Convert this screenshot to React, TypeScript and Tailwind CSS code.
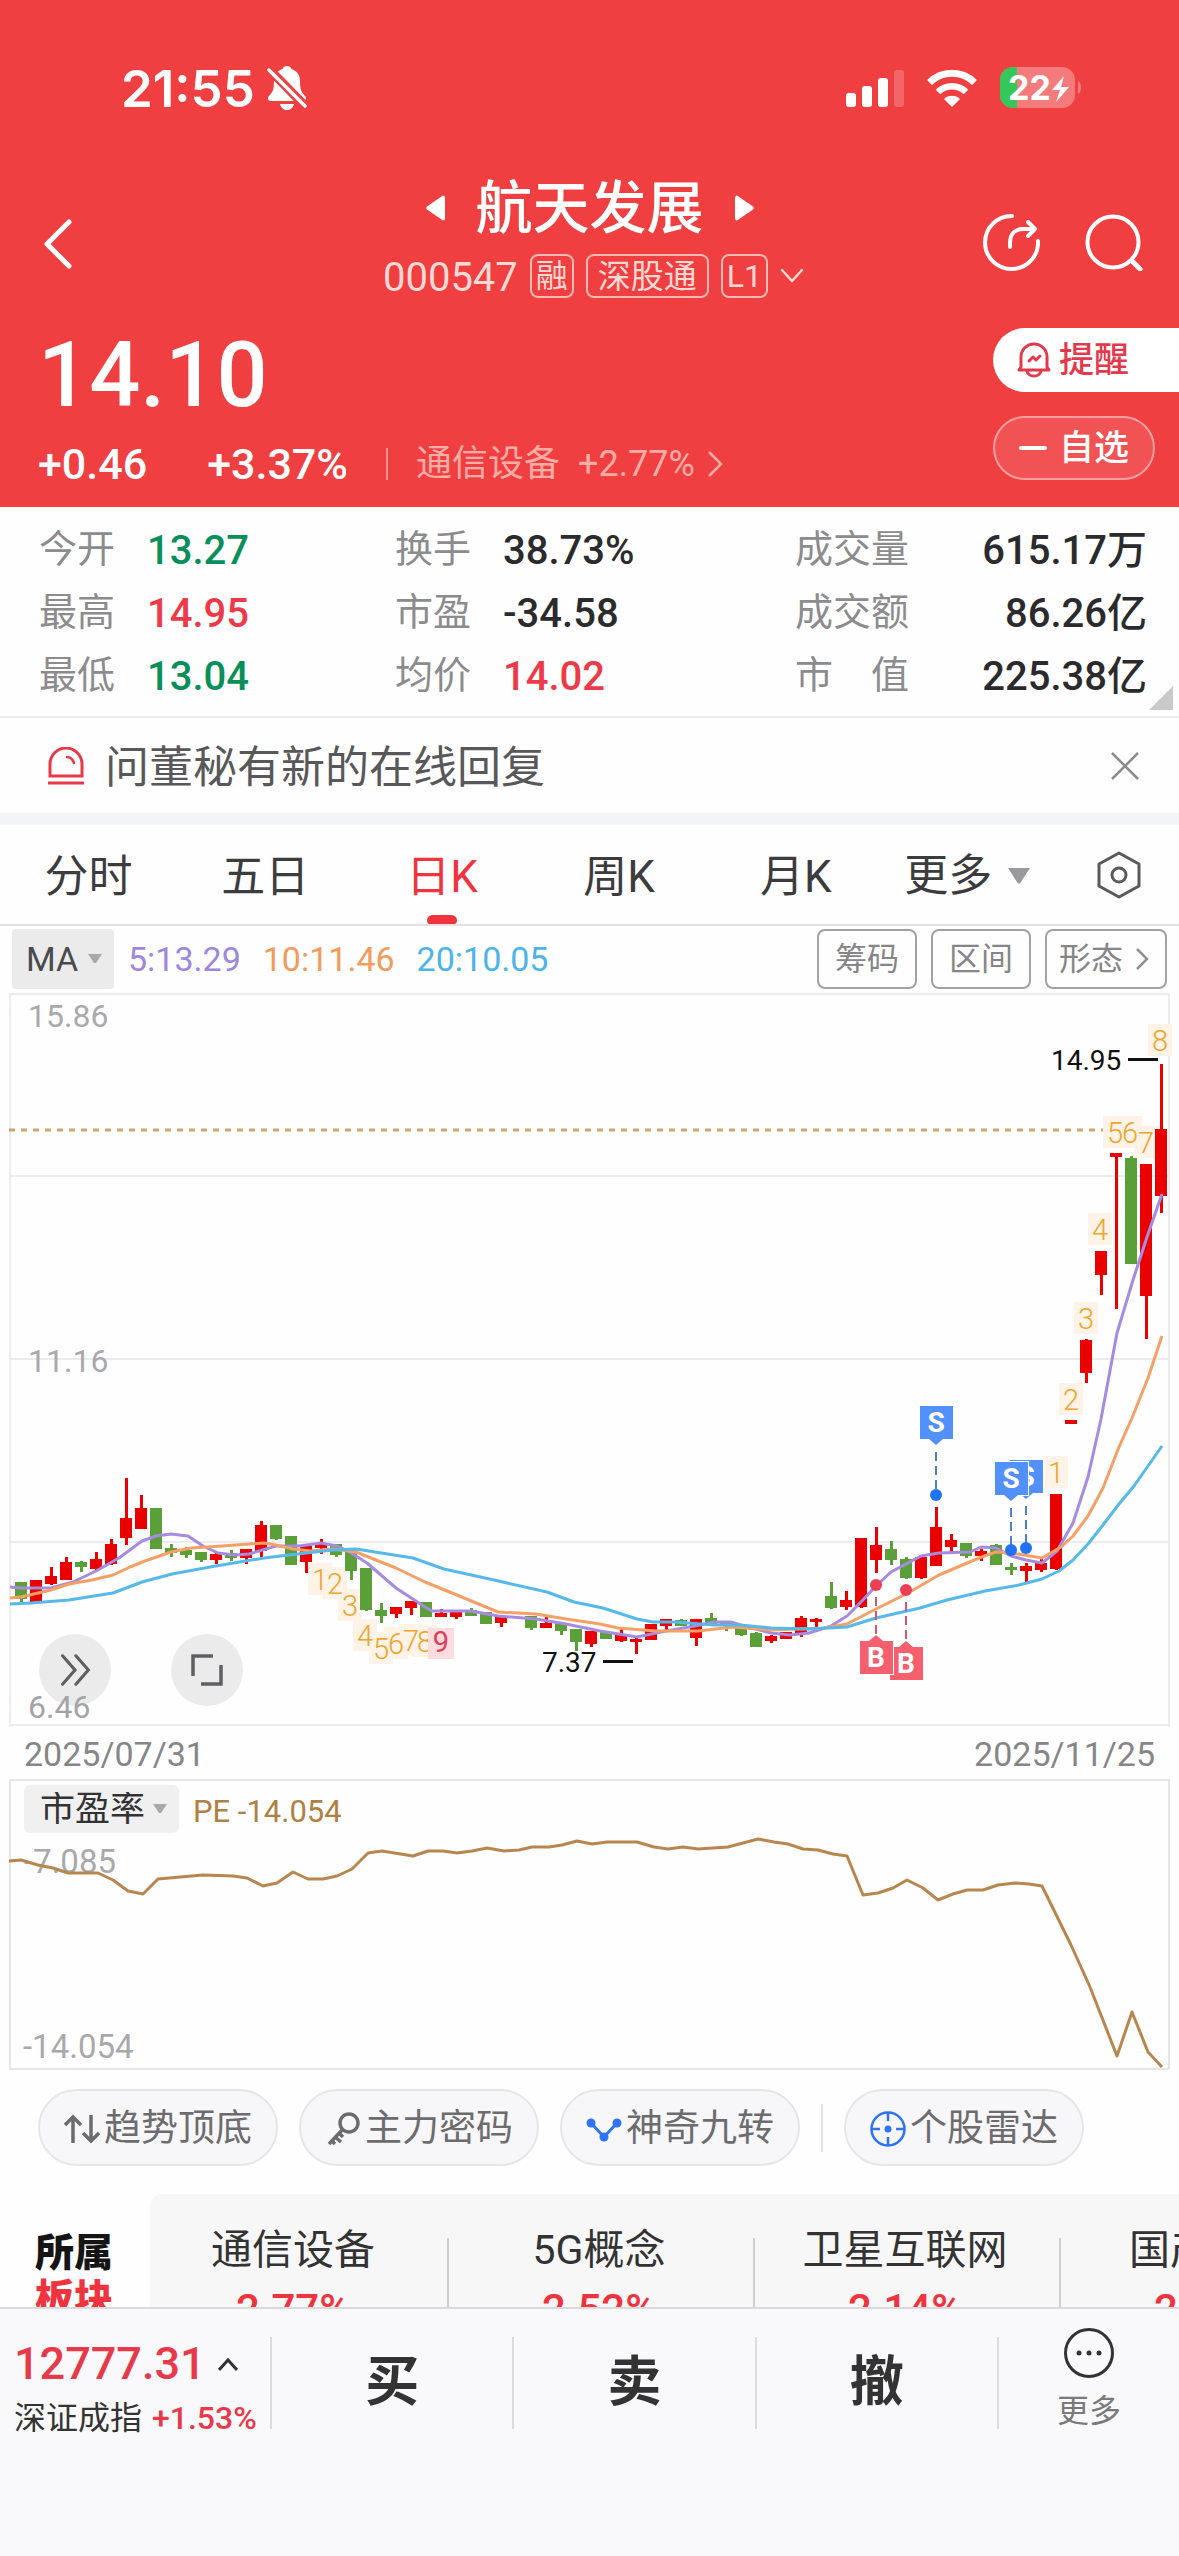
import { useState } from "react";

type Candle = [high: number, top: number, bottom: number, low: number, up: number];

// high, body top, body bottom, low (chart units), 1 = up day
const CANDLES: Candle[] = [
  [592, 592, 609, 612, 0], [590, 590, 612, 612, 1], [577, 586, 594, 595, 1], [567, 572, 590, 590, 1],
  [571, 572, 577, 582, 0], [562, 569, 579, 580, 1], [549, 554, 574, 575, 1], [488, 528, 548, 555, 1],
  [505, 518, 539, 539, 1], [518, 518, 559, 559, 0], [554, 558, 563, 567, 0], [557, 560, 565, 568, 0],
  [562, 562, 570, 572, 0], [563, 564, 570, 574, 1], [560, 563, 568, 571, 0], [559, 559, 568, 574, 1],
  [531, 535, 561, 567, 1], [535, 535, 549, 550, 0], [546, 546, 575, 575, 0], [556, 556, 572, 583, 1],
  [549, 553, 558, 564, 1], [554, 554, 565, 567, 0], [561, 562, 581, 590, 0], [578, 578, 620, 621, 0],
  [613, 620, 626, 633, 0], [617, 617, 624, 628, 1], [611, 611, 618, 625, 1], [612, 612, 627, 627, 0],
  [619, 623, 627, 627, 1], [621, 621, 627, 629, 1], [618, 620, 626, 626, 0], [622, 622, 634, 634, 0],
  [627, 627, 633, 637, 1], [627, 627, 628, 628, 0], [626, 626, 638, 640, 0], [627, 633, 638, 638, 1],
  [633, 633, 641, 645, 0], [639, 639, 652, 661, 0], [641, 641, 654, 657, 1], [642, 642, 649, 649, 0],
  [639, 645, 651, 652, 1], [648, 649, 652, 664, 1], [634, 634, 650, 650, 1], [629, 629, 636, 640, 1],
  [629, 630, 636, 636, 0], [629, 629, 648, 656, 1], [623, 628, 634, 634, 0], [632, 632, 635, 641, 0],
  [634, 635, 645, 646, 0], [642, 643, 657, 657, 0], [645, 646, 651, 653, 1], [642, 642, 649, 649, 1],
  [626, 628, 644, 647, 1], [628, 629, 632, 637, 1], [592, 606, 618, 619, 0], [601, 610, 617, 620, 1],
  [548, 548, 617, 618, 1], [537, 555, 570, 583, 1], [551, 559, 570, 575, 0], [567, 569, 588, 589, 0],
  [567, 567, 588, 589, 1], [517, 537, 576, 576, 1], [544, 550, 557, 562, 1], [553, 553, 566, 568, 0],
  [559, 561, 566, 571, 1], [554, 555, 575, 575, 0], [573, 577, 580, 585, 0], [573, 576, 581, 593, 1],
  [569, 573, 580, 582, 1], [504, 504, 579, 580, 1], [430, 430, 434, 434, 1], [349, 350, 383, 393, 1],
  [261, 261, 285, 305, 1], [163, 163, 167, 319, 1], [166, 168, 274, 274, 0], [174, 174, 306, 349, 1],
  [74, 139, 206, 223, 1],
];

const MA5 =
  "10,597 21,598 51,598 73,592 96,581 119,568 142,551 156,546 171,544 188,546 203,556 218,563 235,565 249,564 276,556 299,556 321,553 337,556 348,561 367,573 396,598 425,617 432,621 471,621 498,626 536,629 566,634 600,641 637,647 666,641 695,636 714,632 731,632 744,636 771,643 790,645 809,643 831,636 847,626 861,612 876,596 891,582 921,566 939,563 970,562 981,557 996,558 1011,566 1026,570 1042,573 1057,561 1073,533 1088,487 1101,429 1109,386 1117,343 1133,290 1147,247 1162,204";
const MA10 =
  "10,608 21,607 51,600 69,594 92,590 113,585 130,577 145,571 171,562 191,558 222,556 264,553 276,555 293,559 310,561 333,559 356,562 396,578 425,592 452,603 498,622 536,624 566,629 600,634 618,638 656,641 698,641 733,637 771,640 824,638 847,634 876,619 908,603 939,585 979,568 996,562 1012,563 1042,568 1061,557 1073,546 1088,526 1103,498 1119,457 1132,428 1148,388 1162,346";
const MA20 =
  "10,614 31,613 69,610 113,603 142,592 172,584 210,577 264,568 306,563 333,560 356,559 413,568 444,579 494,590 547,602 574,612 603,618 637,629 653,632 675,632 714,635 740,635 771,638 809,639 847,637 876,628 920,618 947,610 985,601 1019,595 1042,589 1059,581 1073,570 1088,554 1103,535 1119,514 1134,496 1162,456";
const PE =
  "9,82 21,81 38,86 53,89 68,94 98,94 113,101 128,112 143,115 158,100 203,96 233,97 247,99 263,107 277,104 293,93 308,100 323,100 337,97 352,90 368,74 382,72 413,77 428,72 443,72 457,74 472,72 487,69 504,72 519,71 532,68 549,68 562,66 577,62 592,65 607,63 637,63 654,68 668,70 683,68 698,70 728,68 743,64 758,60 774,63 788,65 803,70 818,71 833,75 847,77 863,116 878,114 893,109 907,101 923,109 938,121 953,115 967,111 983,111 998,106 1015,104 1029,105 1042,107 1071,166 1090,208 1117,277 1132,233 1148,273 1162,288";

// x, centre y, digit
const TURNS: [number, number, string][] = [
  [320, 590, "1"], [335, 594, "2"], [350, 616, "3"], [365, 646, "4"], [381, 659, "5"],
  [396, 654, "6"], [411, 651, "7"], [425, 652, "8"],
  [1056, 483, "1"], [1071, 410, "2"], [1086, 329, "3"], [1100, 240, "4"],
  [1115, 143, "5"], [1130, 143, "6"], [1146, 153, "7"], [1160, 51, "8"],
];

const STATS = [
  [
    { label: "今开", value: "13.27", color: "text-[#0a8f5b]" },
    { label: "最高", value: "14.95", color: "text-[#ee3a48]" },
    { label: "最低", value: "13.04", color: "text-[#0a8f5b]" },
  ],
  [
    { label: "换手", value: "38.73%", color: "text-[#2b2b2d]" },
    { label: "市盈", value: "-34.58", color: "text-[#2b2b2d]" },
    { label: "均价", value: "14.02", color: "text-[#ee3a48]" },
  ],
  [
    { label: "成交量", value: "615.17万", color: "text-[#2b2b2d]" },
    { label: "成交额", value: "86.26亿", color: "text-[#2b2b2d]" },
    { label: "市　值", value: "225.38亿", color: "text-[#2b2b2d]" },
  ],
];

const PERIODS = ["分时", "五日", "日K", "周K", "月K"];

const SECTORS = [
  { name: "通信设备", change: "2.77%" },
  { name: "5G概念", change: "2.52%" },
  { name: "卫星互联网", change: "2.14%" },
  { name: "国产芯片", change: "2.08%" },
];

function StatusBar() {
  return (
    <div className="flex h-16 items-center justify-between pl-[121px] pr-24">
      <div className="flex items-center gap-3">
        <span className="font-['Inter',sans-serif] text-[51px] font-semibold leading-none">21:55</span>
        <svg className="h-11 w-10" viewBox="0 0 40 44" fill="#fff">
          <path d="M20 0c2 0 4 1 4.500 3C30 5 33 9 33 15c0 8 1 11 5 15 2 2 1 5-2 5H4c-3 0-4-3-2-5 4-4 5-7 5-15 0-6 3-10 8.500-12C16 1 18 0 20 0Z" />
          <path d="M13 38h14c-1 4-4 6-7 6s-6-2-7-6Z" />
          <path d="M2 3 38 40" stroke="#f03f41" strokeWidth="9" />
          <path d="M2 4 38 40" stroke="#fff" strokeWidth="3.500" strokeLinecap="round" />
        </svg>
      </div>
      <div className="flex items-center gap-[23px]">
        <svg className="h-10 w-[58px]" viewBox="0 0 58 40" fill="#fff">
          <rect x="0" y="25" width="10" height="14" rx="3" />
          <rect x="16" y="18" width="10" height="21" rx="3" />
          <rect x="32" y="10" width="10" height="29" rx="3" />
          <rect x="48" y="2" width="10" height="37" rx="3" opacity=".2" />
        </svg>
        <svg className="h-10 w-[50px]" viewBox="0 0 50 40" fill="none" stroke="#fff" strokeWidth="7">
          <path d="M2.500 14.500a32 32 0 0 1 45 0" />
          <path d="M11 24a20 20 0 0 1 28 0" strokeWidth="6.500" />
          <path d="M25 39l-8-8a11.500 11.500 0 0 1 16 0Z" fill="#fff" stroke="none" />
        </svg>
        <svg className="h-11 w-[83px]" viewBox="0 0 83 44">
          <clipPath id="battery">
            <rect x="0" y="1" width="75" height="41" rx="13" />
          </clipPath>
          <g clipPath="url(#battery)">
            <rect width="75" height="44" fill="#f57a7c" />
            <rect width="17" height="44" fill="#34c759" />
          </g>
          <path d="M78 15c4 2 4 11 0 13Z" fill="#f57a7c" />
          <text x="8" y="34" fill="#fff" fontSize="34" fontWeight="700" className="font-['Inter',sans-serif]">22</text>
          <path d="M64 10 52 24h8l-4 12 13-15h-8Z" fill="#fff" />
        </svg>
      </div>
    </div>
  );
}

function Header() {
  return (
    <header className="bg-[#f03f41] pb-[15px] pt-14 text-white">
      <StatusBar />
      <div className="mt-12 flex items-center justify-between pl-11 pr-9">
        <button aria-label="返回" className="w-40 pt-4">
          <svg className="h-[50px] w-7" viewBox="0 0 28 50" fill="none" stroke="#fff" strokeWidth="5" strokeLinecap="round" strokeLinejoin="round">
            <path d="M25 3 3 25l22 22" />
          </svg>
        </button>
        <div className="flex flex-col items-center">
          <div className="flex h-20 items-center gap-[31px] pr-2">
            <button aria-label="上一只">
              <svg className="h-[26px] w-[19px]" viewBox="0 0 19 26" fill="#fff">
                <path d="M17 .500c1 0 2 1 2 2v21c0 1-1 2-2 2L1 14.500c-1-1-1-2 0-3Z" />
              </svg>
            </button>
            <h1 className="text-[57px] font-medium leading-none">航天发展</h1>
            <button aria-label="下一只">
              <svg className="h-[26px] w-[19px]" viewBox="0 0 19 26" fill="#fff">
                <path d="M2 .500c-1 0-2 1-2 2v21c0 1 1 2 2 2l16-11c1-1 1-2 0-3Z" />
              </svg>
            </button>
          </div>
          <div className="flex h-14 items-center gap-3 text-[#ffd9d3]">
            <span className="pt-1 text-[40px] leading-none">000547</span>
            <span className="flex h-11 items-center rounded-lg border-2 border-[#ffb9b3] px-1 text-[32px] leading-none">融</span>
            <span className="flex h-11 items-center rounded-lg border-2 border-[#ffb9b3] px-2.5 text-[33px] leading-none">深股通</span>
            <span className="flex h-11 items-center rounded-lg border-2 border-[#ffb9b3] px-1 text-[32px] leading-none">L1</span>
            <button aria-label="展开">
              <svg className="h-4 w-6" viewBox="0 0 24 16" fill="none" stroke="#ffd9d3" strokeWidth="2.500" strokeLinecap="round">
                <path d="m2 2 10 11L22 2" />
              </svg>
            </button>
          </div>
        </div>
        <div className="flex w-40 justify-end gap-[45px] pt-3">
          <button aria-label="分享">
            <svg className="h-[58px] w-[58px]" viewBox="0 0 58 58" fill="none" stroke="#fff" strokeWidth="4" strokeLinecap="round" strokeLinejoin="round">
              <path d="M30 3A26.500 26.500 0 1 0 56 28" />
              <path d="M28 34v-4c0-9 5-14 13-14h11" />
              <path d="m46 9 7 7-7 7" />
            </svg>
          </button>
          <button aria-label="搜索">
            <svg className="h-[58px] w-[58px]" viewBox="0 0 58 58" fill="none" stroke="#fff" strokeWidth="4" strokeLinecap="round">
              <circle cx="28" cy="29" r="25.500" />
              <path d="m47 48 8 8" strokeWidth="5" />
            </svg>
          </button>
        </div>
      </div>

      <div className="flex justify-between">
        <div className="pl-[38px] pt-7">
          <div className="flex h-[88px] items-center text-[90px] font-medium leading-none">14.10</div>
          <div className="mt-4 flex h-14 items-center text-[43px] font-medium leading-none">
            <span className="mr-15">+0.46</span>
            <span>+3.37%</span>
            <span className="ml-[38px] h-8 w-0.5 bg-[#f8908f]" />
            <a href="#sector" className="ml-7 flex items-center gap-[18px] text-[36px] font-normal text-[#ffaca6]">
              通信设备
              <span>+2.77%</span>
              <svg className="-ml-1.5 h-7 w-4" viewBox="0 0 16 28" fill="none" stroke="#ffaca6" strokeWidth="2.500">
                <path d="m2 2 12 12L2 26" />
              </svg>
            </a>
          </div>
        </div>
        <div className="flex w-[186px] flex-col gap-6 pt-6 text-[35px] font-medium leading-none">
          <button className="flex h-16 items-center gap-2 rounded-l-full bg-white pl-6 text-[#e23a4c]">
            <svg className="h-9 w-[34px]" viewBox="0 0 34 36" fill="none" stroke="#e23a4c" strokeWidth="3" strokeLinecap="round" strokeLinejoin="round">
              <path d="M4 25V15a13 13 0 0 1 26 0v10l2 3H2Z" />
              <path d="M10 29c1 4 4 5 7 5s6-1 7-5" />
              <path d="m12 19 4-4 3 3 4-4" />
            </svg>
            提醒
          </button>
          <button className="mr-6 flex h-16 items-center gap-3 rounded-full border-2 border-[#f9a09f] bg-[#f15254] pl-6">
            <span className="h-1 w-7 rounded-full bg-white" />
            自选
          </button>
        </div>
      </div>
    </header>
  );
}

function Stats() {
  return (
    <section className="relative flex justify-between border-b-2 border-[#ececee] pb-2.5 pl-[39px] pr-8 pt-2.5">
      {STATS.map((column, i) => (
        <dl key={i} className={i === 2 ? "w-[352px]" : i === 1 ? "w-[292px]" : "w-[248px]"}>
          {column.map((s) => (
            <div key={s.label} className={`flex h-[63px] items-center ${i === 2 ? "justify-between" : "gap-8"}`}>
              <dt className="whitespace-pre text-[38px] leading-none text-[#8c8c8e]">{s.label}</dt>
              <dd className={`pt-1 text-[40px] font-medium leading-none ${s.color}`}>{s.value}</dd>
            </div>
          ))}
        </dl>
      ))}
      <svg className="absolute bottom-1.5 right-1.5 h-6 w-6" viewBox="0 0 24 24" fill="#c9c9cb">
        <path d="M24 0v24H0Z" />
      </svg>
    </section>
  );
}

function Notice() {
  return (
    <section className="flex h-[107px] items-center border-b-12 border-[#f3f4f7] pl-[47px] pr-10">
      <svg className="h-[38px] w-[38px]" viewBox="0 0 38 38" fill="none" stroke="#e8394a" strokeWidth="3">
        <path d="M3 29V17a16 16 0 0 1 32 0v12Z" />
        <path d="M1 36h36" />
        <path d="M20 10c4 0 6 3 7 6" strokeLinecap="round" strokeWidth="2.500" />
      </svg>
      <span className="ml-5 flex-1 pt-1 text-[44px] leading-none text-[#58585a]">问董秘有新的在线回复</span>
      <button aria-label="关闭">
        <svg className="h-7 w-7" viewBox="0 0 28 28" stroke="#8c8c8e" strokeWidth="2.500">
          <path d="m1 1 26 26M27 1 1 27" />
        </svg>
      </button>
    </section>
  );
}

function Tabs() {
  const [active, setActive] = useState("日K");
  return (
    <nav className="flex h-[101px] border-b-2 border-[#e2e2e4] text-[44px] leading-none text-[#3c3c3e]">
      {PERIODS.map((p) => (
        <button
          key={p}
          onClick={() => setActive(p)}
          className={`flex w-[15%] flex-col items-center justify-between pt-[30px] ${active === p ? "text-[#f0343f]" : ""}`}
        >
          {p}
          <span className={`h-[9px] w-[30px] rounded-t-md rounded-b-sm ${active === p ? "bg-[#f0343f]" : ""}`} />
        </button>
      ))}
      <button className="flex flex-1 items-center gap-4 pl-5 pt-0.5">
        更多
        <svg className="h-4 w-[22px]" viewBox="0 0 22 16" fill="#9a9a9c">
          <path d="M0 0h22L13 14c-1 2-3 2-4 0Z" />
        </svg>
      </button>
      <button aria-label="设置" className="pr-[38px]">
        <svg className="h-12 w-11" viewBox="0 0 44 48" fill="none" stroke="#5a5a5c" strokeWidth="3" strokeLinejoin="round">
          <path d="M22 2 42 13v22L22 46 2 35V13Z" />
          <circle cx="22" cy="24" r="7" />
        </svg>
      </button>
    </nav>
  );
}

function DropArrow() {
  return (
    <svg className="pointer-events-none absolute right-3 h-2.5 w-3.5" viewBox="0 0 14 10" fill="#a8a8aa">
      <path d="M0 0h14L8 9H6Z" />
    </svg>
  );
}

function MaBar() {
  return (
    <div className="flex h-16 items-center gap-[22px] pl-3 pr-3 pt-0.5 text-[34px] leading-none">
      <label className="relative -mr-2 flex items-center">
        <select aria-label="指标" className="h-[60px] w-[102px] appearance-none rounded bg-[#ebebeb] pl-3.5 text-[#4a4a4c]">
          <option>MA</option>
        </select>
        <DropArrow />
      </label>
      <span className="text-[#9f87dc]">5:13.29</span>
      <span className="text-[#f39b5c]">10:11.46</span>
      <span className="flex-1 text-[#4db4ea]">20:10.05</span>
      <div className="flex gap-3.5 text-[32px] text-[#868688]">
        <button className="h-[60px] rounded-lg border-2 border-[#a2a2a4] px-4">筹码</button>
        <button className="h-[60px] rounded-lg border-2 border-[#a2a2a4] px-4">区间</button>
        <button className="flex h-[60px] items-center gap-3 rounded-lg border-2 border-[#a2a2a4] pl-3 pr-4">
          形态
          <svg className="h-6 w-3.5" viewBox="0 0 14 24" fill="none" stroke="#909092" strokeWidth="2.500">
            <path d="m2 2 10 10L2 22" />
          </svg>
        </button>
      </div>
    </div>
  );
}

function Signal({ x, y, dot, kind }: { x: number; y: number; dot: number; kind: "S" | "B" }) {
  const sell = kind === "S";
  const tip = sell ? `M${x - 7} ${y + 33}h14l-7 6Z` : `M${x - 7} ${y}h14l-7-6Z`;
  return (
    <g>
      <line
        x1={x}
        x2={x}
        y1={sell ? y + 46 : dot + 12}
        y2={sell ? dot : y - 6}
        stroke={sell ? "#4c7fd0" : "#cf5870"}
        strokeWidth="2"
        strokeDasharray="9 5"
      />
      <circle cx={x} cy={dot} r="6" fill={sell ? "#2272f5" : "#ee3e52"} />
      <rect x={x - 17} y={y - 1} width="35" height="35" fill="#fff" />
      <rect x={x - 16} y={y} width="33" height="33" fill={sell ? "#5290fb" : "#f6606e"} />
      <path d={tip} fill={sell ? "#5290fb" : "#f6606e"} />
      <text x={x} y={y + 26} textAnchor="middle" fill="#fff" fontSize="28" fontWeight="700">{kind}</text>
    </g>
  );
}

function KLineChart() {
  return (
    <div className="relative">
      <svg className="w-full" viewBox="0 0 1179 737" fontSize="32">
        <g stroke="#ececee" strokeWidth="2">
          <path d="M9 4h1160M9 186h1160M9 369h1160M9 552h1160M9 735h1160M10 4v733M1169 4v733" fill="none" />
        </g>
        <g fill="#a9a9ab">
          <text x="28" y="37">15.86</text>
          <text x="28" y="382">11.16</text>
        </g>
        <path d="M9 140h1153" stroke="#c8a86c" strokeWidth="3" strokeDasharray="6 6" />
        {TURNS.map(([x, y], i) => (
          <rect key={i} x={x - 12} y={y - 17} width="24" height="32" fill="#fef3e6" />
        ))}
        {CANDLES.map(([high, top, bottom, low, up], i) => (
          <g key={i} fill={up ? "#eb0000" : "#5b9f38"}>
            <rect x={21 + i * 15 - 1} y={high} width="3" height={low - high} />
            <rect x={21 + i * 15 - 6} y={top} width="12" height={bottom - top} />
          </g>
        ))}
        <g fill="none" strokeWidth="3" strokeLinejoin="round">
          <polyline points={MA5} stroke="#a68be0" />
          <polyline points={MA10} stroke="#f4a067" />
          <polyline points={MA20} stroke="#56b9ea" />
        </g>
        <g fill="#eda52c" fontSize="29" textAnchor="middle" fontWeight="300">
          {TURNS.map(([x, y, n], i) => (
            <text key={i} x={x} y={y + 10}>{n}</text>
          ))}
        </g>
        <rect x="428" y="638" width="26" height="31" fill="#fcdcdf" />
        <text x="441" y="662" textAnchor="middle" fontSize="29" fill="#e2405a">9</text>
        <Signal x={936} y={416} dot={505} kind="S" />
        <Signal x={1026} y={470} dot={558} kind="S" />
        <Signal x={1011} y={472} dot={560} kind="S" />
        <Signal x={906} y={657} dot={600} kind="B" />
        <Signal x={876} y={651} dot={595} kind="B" />
        <g fill="#111" fontSize="28">
          <text x="542" y="682">7.37</text>
          <rect x="603" y="670" width="30" height="3" />
          <text x="1051" y="80">14.95</text>
          <rect x="1128" y="68" width="30" height="3" />
        </g>
      </svg>
      <div className="absolute bottom-[21px] left-[39px] flex gap-15">
        <button aria-label="快进" className="flex size-[72px] items-center justify-center rounded-full bg-[#ebebeb]">
          <svg className="h-8 w-8" viewBox="0 0 36 36" fill="none" stroke="#5f5f61" strokeWidth="3.500" strokeLinecap="round">
            <path d="m4 2 14 16L4 34M19 2l14 16-14 16" />
          </svg>
        </button>
        <button aria-label="全屏" className="flex size-[72px] items-center justify-center rounded-full bg-[#ebebeb]">
          <svg className="size-8" viewBox="0 0 32 32" fill="none" stroke="#5f5f61" strokeWidth="3.500">
            <path d="M2 22V2h20M30 11v19H10" />
          </svg>
        </button>
      </div>
      <span className="absolute bottom-1 left-7 text-[32px] leading-none text-[#a4a4a6]">6.46</span>
    </div>
  );
}

function PeChart() {
  return (
    <div className="relative">
      <svg className="w-full" viewBox="0 0 1179 292" fontSize="33">
        <path d="M9 1h1160M9 290h1160M10 0v290M1169 0v290" fill="none" stroke="#e6e6e8" strokeWidth="2" />
        <g fill="#a9a9ab">
          <text x="24" y="94">-7.085</text>
          <text x="23" y="279">-14.054</text>
        </g>
        <polyline points={PE} fill="none" stroke="#b8864f" strokeWidth="3" strokeLinejoin="round" />
      </svg>
      <div className="absolute left-6 top-1.5 flex items-center gap-3.5">
        <label className="relative flex items-center">
          <select aria-label="副图指标" className="h-12 w-[155px] appearance-none rounded-md bg-[#f0f0f0] pl-4 text-[35px] leading-none text-[#333]">
            <option>市盈率</option>
          </select>
          <DropArrow />
        </label>
        <span className="pt-1 text-[31px] leading-none text-[#b08045]">PE -14.054</span>
      </div>
    </div>
  );
}

function Tools() {
  const pill = "flex h-[77px] items-center gap-1 rounded-full border-2 border-[#e6e6e8] bg-[#f7f6f8] px-6 pt-0.5";
  return (
    <div className="mt-[18px] flex items-center gap-[21px] pl-[38px] text-[37px] leading-none text-[#6c6c6e]">
      <button className={pill}>
        <svg className="h-[30px] w-9" viewBox="0 0 36 30" fill="none" stroke="#6c6c6e" strokeWidth="3.500">
          <path d="M9 29V3M1 11l8-8 8 8M27 1v26M35 19l-8 8-8-8" />
        </svg>
        趋势顶底
      </button>
      <button className={pill}>
        <svg className="h-9 w-9" viewBox="0 0 36 36" fill="none" stroke="#6c6c6e" strokeWidth="3.500">
          <circle cx="24" cy="12" r="9" />
          <path d="M18 18 4 33M10 26l6 5M6 29l4 4M14 22l4 4" />
        </svg>
        主力密码
      </button>
      <button className={pill}>
        <svg className="h-9 w-9" viewBox="0 0 36 36" fill="#2e74f5">
          <path d="M5 12 18 26 31 12" fill="none" stroke="#2e74f5" strokeWidth="3" />
          <circle cx="5" cy="12" r="4.500" />
          <circle cx="31" cy="12" r="4.500" />
          <circle cx="18" cy="26" r="4.500" />
        </svg>
        神奇九转
      </button>
      <span className="h-12 w-0.5 bg-[#e2e2e4]" />
      <button className={pill}>
        <svg className="h-9 w-9" viewBox="0 0 36 36" fill="none" stroke="#2e74f5" strokeWidth="2.500">
          <circle cx="18" cy="18" r="16.500" />
          <path d="M18 1v9M18 26v9M1 18h9M26 18h9" />
          <circle cx="18" cy="18" r="3.500" fill="#2e74f5" stroke="none" />
        </svg>
        个股雷达
      </button>
    </div>
  );
}

function Sectors() {
  return (
    <section id="sector" className="mt-7 flex">
      <h2 className="w-[150px] shrink-0 pl-[35px] pt-9 text-[39px] font-black leading-[46px] text-[#151515]">
        所属
        <br />
        <span className="text-[#f0343f]">板块</span>
      </h2>
      <div className="flex rounded-l-xl bg-[#f8f7f8] pb-10">
        {SECTORS.map((s) => (
          <a key={s.name} href="#sector" className="relative flex w-[306px] shrink-0 flex-col items-center pr-5 pt-[34px]">
            <span className="text-[41px] leading-[44px] text-[#333]">{s.name}</span>
            <span className="mt-4 text-[42px] font-medium leading-[44px] text-[#f0343f]">{s.change}</span>
            <span className="absolute right-[7px] top-11 h-24 w-0.5 bg-[#cfcfd1]" />
          </a>
        ))}
      </div>
    </section>
  );
}

function BottomBar() {
  return (
    <footer className="relative h-[249px] shrink-0 border-t-2 border-[#d8dade] bg-[#f9f9fb] pt-7">
      <div className="flex h-[92px] text-[#333]">
        <button className="flex w-[270px] shrink-0 flex-col pl-3.5 text-left">
          <span className="flex items-center gap-3 pt-1 text-[45px] font-medium leading-none text-[#e8394a]">
            12777.31
            <svg className="h-3.5 w-5" viewBox="0 0 20 14" fill="none" stroke="#333" strokeWidth="3">
              <path d="m1 13 9-10 9 10" />
            </svg>
          </span>
          <span className="mt-4 flex items-center gap-2.5 whitespace-nowrap text-[32px] leading-none">
            深证成指<span className="font-medium text-[#e8394a]">+1.53%</span>
          </span>
        </button>
        {["买", "卖", "撤"].map((t) => (
          <button key={t} className="flex-1 border-l-2 border-[#dcdcde] text-[54px] font-bold leading-none">
            {t}
          </button>
        ))}
        <button className="flex w-[182px] shrink-0 flex-col items-center gap-4 border-l-2 border-[#dcdcde] text-[32px] leading-none text-[#7a7a7c]">
          <svg className="-mt-2.5 size-[52px] shrink-0" viewBox="0 0 52 52" fill="#333">
            <circle cx="26" cy="26" r="23.500" fill="none" stroke="#333" strokeWidth="3" />
            <circle cx="16" cy="26" r="2.500" />
            <circle cx="26" cy="26" r="2.500" />
            <circle cx="36" cy="26" r="2.500" />
          </svg>
          更多
        </button>
      </div>
    </footer>
  );
}

export default function App() {
  return (
    <div className="flex h-screen flex-col bg-[#fefefe] font-['Roboto','Noto_Sans_CJK_SC',sans-serif]">
      <main className="min-h-0 flex-1 overflow-hidden">
        <Header />
        <Stats />
        <Notice />
        <Tabs />
        <MaBar />
        <KLineChart />
        <div className="flex h-[52px] items-center justify-between pl-6 pr-6 pt-0.5 text-[34px] leading-none text-[#868688]">
          <time>2025/07/31</time>
          <time>2025/11/25</time>
        </div>
        <PeChart />
        <Tools />
        <Sectors />
      </main>
      <BottomBar />
    </div>
  );
}
